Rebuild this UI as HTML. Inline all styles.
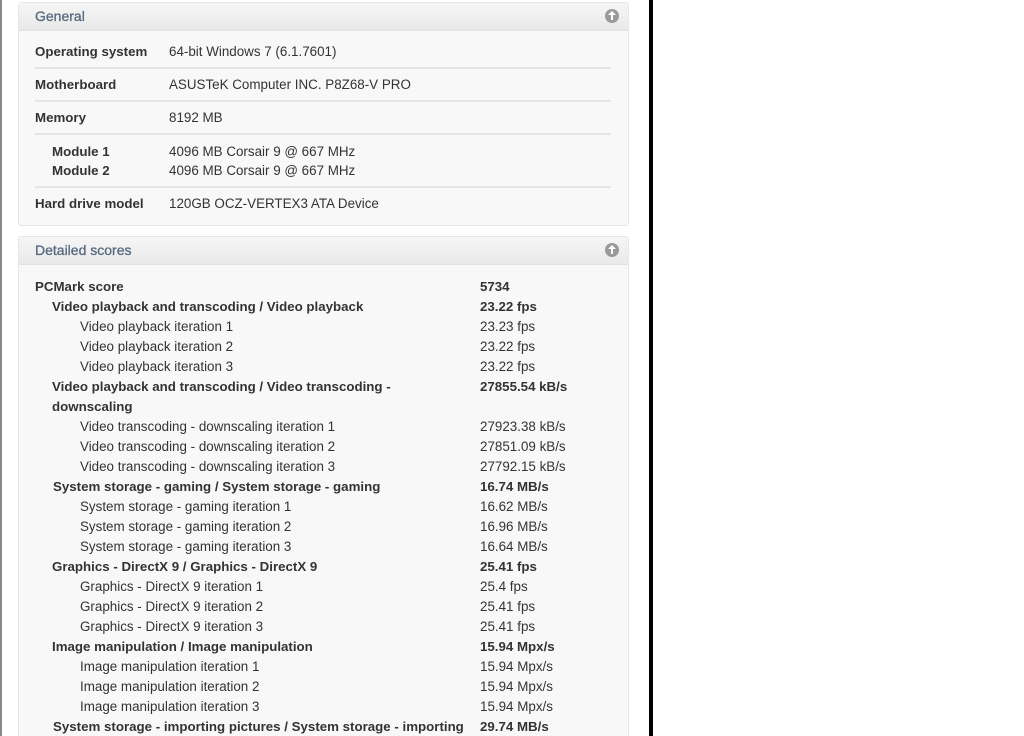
<!DOCTYPE html>
<html><head><style>
html,body{margin:0;width:1024px;height:736px;overflow:hidden}
body{background:#fff;position:relative;font-family:"Liberation Sans",sans-serif;font-size:13.4px;color:#333}
.lb{position:absolute;left:0;top:0;width:2px;height:736px;background:#888}
.rb{position:absolute;left:649px;top:0;width:4px;height:736px;background:#000}
.panel{position:absolute;left:18px;width:609px;background:#f8f8f8;border:1px solid #e6e6e6;border-radius:3px}
.hd{height:27px;background:linear-gradient(#f6f6f6,#e9e9e9);border-bottom:1px solid #e2e2e2;color:#56697e;font-size:14px;line-height:27px;padding-left:16px;position:relative;-webkit-text-stroke:0.3px #56697e}
.ic{position:absolute;right:9px;top:6px;width:14px;height:14px;border-radius:50%;background:#9a9a9a}
.ic:after{content:"";position:absolute;left:3px;top:2px;border-left:4px solid transparent;border-right:4px solid transparent;border-bottom:4px solid #fff}
.ic:before{content:"";position:absolute;left:6px;top:5px;width:2px;height:6px;background:#fff}
.t{position:absolute;white-space:nowrap;line-height:20px;margin-top:1px}
.b{font-weight:bold;font-size:13.3px}
.hr{position:absolute;left:35px;width:576px;height:2px;background:#e4e4e4}
</style></head><body>
<div class="lb"></div><div class="rb"></div>
<div class="panel" style="top:2px;height:222px"><div class="hd">General<div class="ic"></div></div></div>
<div class="panel" style="top:236px;height:510px"><div class="hd">Detailed scores<div class="ic"></div></div></div>

<div class="t b" style="left:35px;top:41px">Operating system</div><div class="t" style="left:169px;top:41px">64-bit Windows 7 (6.1.7601)</div>
<div class="hr" style="top:67px"></div>
<div class="t b" style="left:35px;top:74px">Motherboard</div><div class="t" style="left:169px;top:74px">ASUSTeK Computer INC. P8Z68-V PRO</div>
<div class="hr" style="top:100px"></div>
<div class="t b" style="left:35px;top:107px">Memory</div><div class="t" style="left:169px;top:107px">8192 MB</div>
<div class="hr" style="top:133px"></div>
<div class="t b" style="left:52px;top:141px">Module 1</div><div class="t" style="left:169px;top:141px">4096 MB Corsair 9 @ 667 MHz</div>
<div class="t b" style="left:52px;top:160px">Module 2</div><div class="t" style="left:169px;top:160px">4096 MB Corsair 9 @ 667 MHz</div>
<div class="hr" style="top:186px"></div>
<div class="t b" style="left:35px;top:193px">Hard drive model</div><div class="t" style="left:169px;top:193px">120GB OCZ-VERTEX3 ATA Device</div>

<div class="t b" style="left:35px;top:276px">PCMark score</div><div class="t b" style="left:480px;top:276px">5734</div>
<div class="t b" style="left:52px;top:296px">Video playback and transcoding / Video playback</div><div class="t b" style="left:480px;top:296px">23.22 fps</div>
<div class="t" style="left:80px;top:316px">Video playback iteration 1</div><div class="t" style="left:480px;top:316px">23.23 fps</div>
<div class="t" style="left:80px;top:336px">Video playback iteration 2</div><div class="t" style="left:480px;top:336px">23.22 fps</div>
<div class="t" style="left:80px;top:356px">Video playback iteration 3</div><div class="t" style="left:480px;top:356px">23.22 fps</div>
<div class="t b" style="left:52px;top:376px">Video playback and transcoding / Video transcoding -</div><div class="t b" style="left:480px;top:376px">27855.54 kB/s</div>
<div class="t b" style="left:52px;top:396px">downscaling</div>
<div class="t" style="left:80px;top:416px">Video transcoding - downscaling iteration 1</div><div class="t" style="left:480px;top:416px">27923.38 kB/s</div>
<div class="t" style="left:80px;top:436px">Video transcoding - downscaling iteration 2</div><div class="t" style="left:480px;top:436px">27851.09 kB/s</div>
<div class="t" style="left:80px;top:456px">Video transcoding - downscaling iteration 3</div><div class="t" style="left:480px;top:456px">27792.15 kB/s</div>
<div class="t b" style="left:53px;top:476px">System storage - gaming / System storage - gaming</div><div class="t b" style="left:480px;top:476px">16.74 MB/s</div>
<div class="t" style="left:80px;top:496px">System storage - gaming iteration 1</div><div class="t" style="left:480px;top:496px">16.62 MB/s</div>
<div class="t" style="left:80px;top:516px">System storage - gaming iteration 2</div><div class="t" style="left:480px;top:516px">16.96 MB/s</div>
<div class="t" style="left:80px;top:536px">System storage - gaming iteration 3</div><div class="t" style="left:480px;top:536px">16.64 MB/s</div>
<div class="t b" style="left:52px;top:556px">Graphics - DirectX 9 / Graphics - DirectX 9</div><div class="t b" style="left:480px;top:556px">25.41 fps</div>
<div class="t" style="left:80px;top:576px">Graphics - DirectX 9 iteration 1</div><div class="t" style="left:480px;top:576px">25.4 fps</div>
<div class="t" style="left:80px;top:596px">Graphics - DirectX 9 iteration 2</div><div class="t" style="left:480px;top:596px">25.41 fps</div>
<div class="t" style="left:80px;top:616px">Graphics - DirectX 9 iteration 3</div><div class="t" style="left:480px;top:616px">25.41 fps</div>
<div class="t b" style="left:52px;top:636px">Image manipulation / Image manipulation</div><div class="t b" style="left:480px;top:636px">15.94 Mpx/s</div>
<div class="t" style="left:80px;top:656px">Image manipulation iteration 1</div><div class="t" style="left:480px;top:656px">15.94 Mpx/s</div>
<div class="t" style="left:80px;top:676px">Image manipulation iteration 2</div><div class="t" style="left:480px;top:676px">15.94 Mpx/s</div>
<div class="t" style="left:80px;top:696px">Image manipulation iteration 3</div><div class="t" style="left:480px;top:696px">15.94 Mpx/s</div>
<div class="t b" style="left:53px;top:716px">System storage - importing pictures / System storage - importing</div><div class="t b" style="left:480px;top:716px">29.74 MB/s</div>
</body></html>
